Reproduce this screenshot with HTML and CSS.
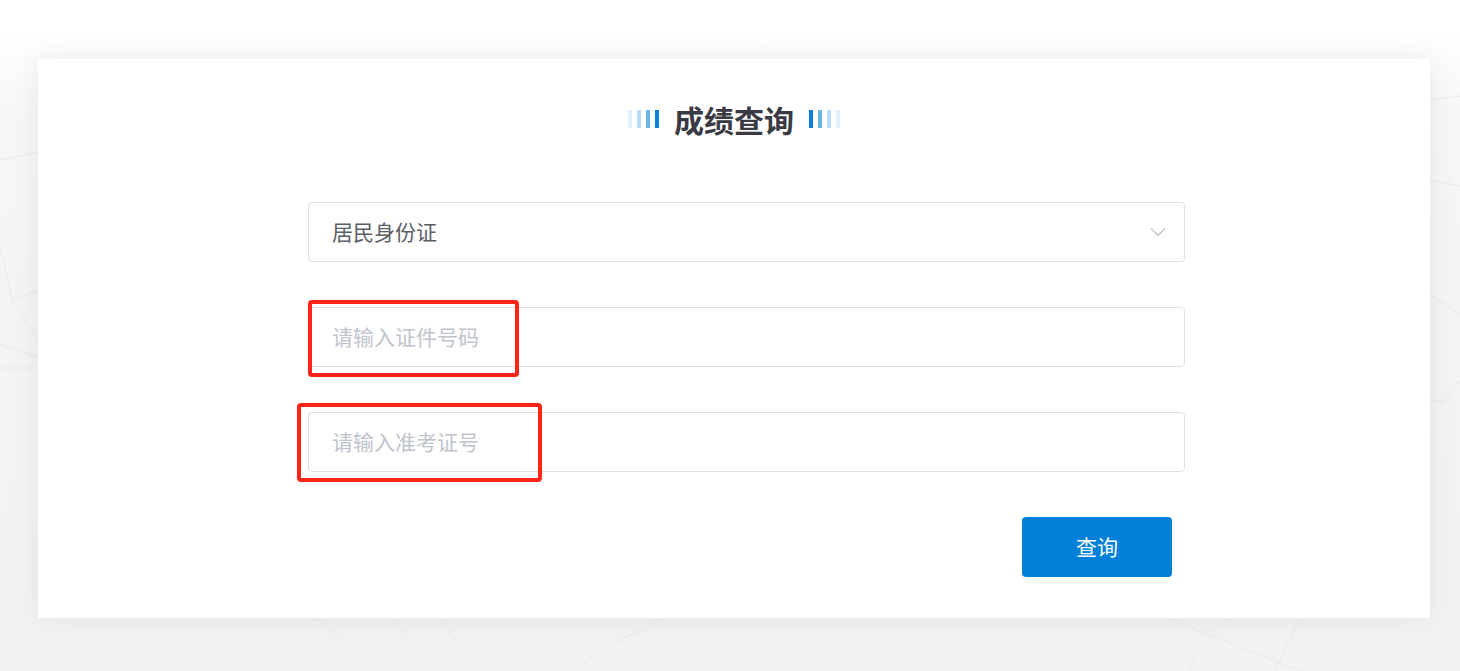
FILE: index.html
```html
<!DOCTYPE html>
<html lang="zh-CN">
<head>
<meta charset="utf-8">
<title>成绩查询</title>
<link rel="stylesheet" href="styles.css">
</head>
<body>
<div class="page">
  <svg class="bg-lines" width="1460" height="671" viewBox="0 0 1460 671" aria-hidden="true">
    <g stroke="#e9e9e9" stroke-width="1" fill="none">
      <path d="M0 160 L40 152"/>
      <path d="M0 245 L12 300 L38 290"/>
      <path d="M12 300 L38 340"/>
      <path d="M0 345 L38 357"/>
      <path d="M0 368 L38 368"/>
      <path d="M1430 100 L1460 96"/>
      <path d="M1430 180 L1460 186"/>
      <path d="M1430 295 L1460 314"/>
      <path d="M1430 400 L1445 402 L1460 380"/>
      <path d="M315 618 L370 671"/>
      <path d="M393 618 L430 671"/>
      <path d="M440 618 L475 671"/>
      <path d="M665 618 L600 650 L575 671"/>
      <path d="M1165 618 L1235 645 L1300 671"/>
      <path d="M1230 618 L1200 645 L1190 671"/>
      <path d="M1300 618 L1280 660 L1275 671"/>
    </g>
  </svg>
  <main class="card">
    <h1 class="title">
      <span class="deco deco-left"><i></i><i></i><i></i><i></i></span>
      <span class="title-text">成绩查询</span>
      <span class="deco deco-right"><i></i><i></i><i></i><i></i></span>
    </h1>
    <form class="form">
      <div class="field select">
        <span class="select-value">居民身份证</span>
        <svg class="arrow" width="16" height="10" viewBox="0 0 16 10"><path d="M1 1.5 L8 8.5 L15 1.5" fill="none" stroke="#c0c4cc" stroke-width="1.3"/></svg>
      </div>
      <div class="field-wrap">
        <div class="field"><span class="placeholder">请输入证件号码</span></div>
        <span class="mark mark-1"></span>
      </div>
      <div class="field-wrap">
        <div class="field"><span class="placeholder">请输入准考证号</span></div>
        <span class="mark mark-2"></span>
      </div>
      <div class="actions">
        <button type="button" class="btn">查询</button>
      </div>
    </form>
  </main>
</div>
</body>
</html>
```

FILE: styles.css
```css
html, body {
  margin: 0;
  padding: 0;
}
body {
  font-family: "Noto Sans CJK SC", "Noto Sans", "Liberation Sans", sans-serif;
  width: 1460px;
  height: 671px;
  overflow: hidden;
}
.page {
  position: relative;
  width: 1460px;
  height: 671px;
  padding-top: 59px;
  box-sizing: border-box;
  background:
    linear-gradient(to bottom, #ffffff 0px, #ffffff 30px, #f7f7f7 110px, #f4f4f4 300px, #f3f3f3 500px, #f2f2f2 671px);
}
.bg-lines {
  position: absolute;
  left: 0;
  top: 0;
}
.card {
  position: relative;
  margin-left: 38px;
  width: 1392px;
  height: 559px;
  background: #fff;
  box-shadow: 0 0 28px rgba(0, 0, 0, 0.07);
  box-sizing: border-box;
  padding-top: 39px;
}
.title {
  margin: 0;
  display: flex;
  align-items: center;
  justify-content: center;
  gap: 15px;
  height: 42px;
}
.title-text {
  font-size: 30px;
  font-weight: 700;
  color: #3a3a44;
  line-height: 42px;
}
.deco {
  display: flex;
  gap: 5px;
  height: 18px;
}
.deco i {
  display: block;
  width: 4px;
  height: 18px;
}
.deco-left i:nth-child(1) { background: #dfeffb; }
.deco-left i:nth-child(2) { background: #b9dcf4; }
.deco-left i:nth-child(3) { background: #6cb4e6; }
.deco-left i:nth-child(4) { background: #0a7fd8; }
.deco-right i:nth-child(1) { background: #0a7fd8; }
.deco-right i:nth-child(2) { background: #6cb4e6; }
.deco-right i:nth-child(3) { background: #b9dcf4; }
.deco-right i:nth-child(4) { background: #dfeffb; }

.form {
  margin: 62px 0 0 270px;
  width: 877px;
  display: flex;
  flex-direction: column;
  gap: 45px;
}
.field-wrap {
  position: relative;
}
.field {
  height: 60px;
  border: 1px solid #dcdfe6;
  border-radius: 4px;
  box-sizing: border-box;
  display: flex;
  align-items: center;
  padding: 0 23px 3px;
  font-size: 21px;
  background: #fff;
}
.select {
  justify-content: space-between;
  padding-right: 18px;
}
.select .arrow {
  margin-top: 3px;
}
.select-value {
  color: #5a5e66;
}
.placeholder {
  color: #c0c4cc;
}
.arrow {
  display: block;
}
.mark {
  position: absolute;
  border: 4px solid #ff2418;
  border-radius: 4px;
  box-sizing: border-box;
  pointer-events: none;
}
.mark-1 {
  left: 0;
  top: -7px;
  width: 211px;
  height: 77px;
}
.mark-2 {
  left: -11px;
  top: -9px;
  width: 245px;
  height: 79px;
}
.actions {
  display: flex;
  justify-content: flex-end;
  padding-right: 13px;
}
.btn {
  width: 150px;
  height: 60px;
  border: none;
  border-radius: 4px;
  background: #0080d9;
  color: #fff;
  font-family: inherit;
  font-size: 21px;
  padding: 0 0 3px;
  cursor: pointer;
}
```
